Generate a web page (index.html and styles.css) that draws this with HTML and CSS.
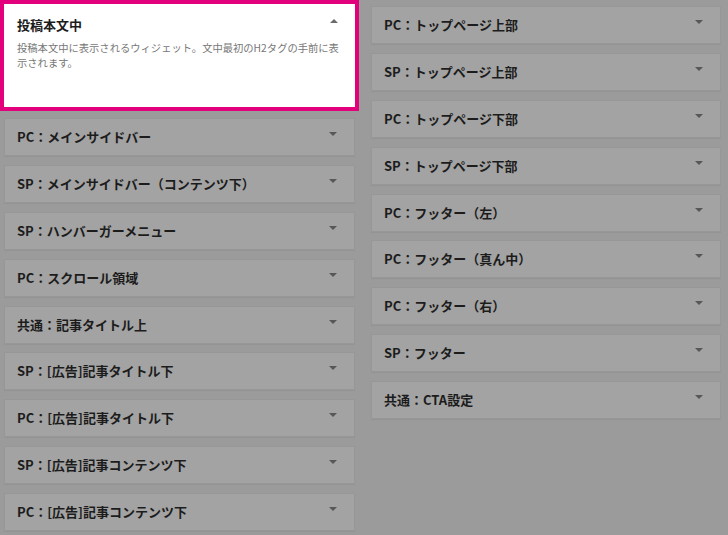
FILE: index.html
```html
<!DOCTYPE html>
<html lang="ja">
<head>
  <meta charset="UTF-8">
  <title>ウィジェット</title>
  <link rel="stylesheet" href="styles.css">
</head>
<body>
  <div class="widgets">
    <div class="column left">
      <div class="widget open">
        <div class="widget-head">
          <h3>投稿本文中</h3>
          <span class="arrow up"></span>
        </div>
        <p class="desc">投稿本文中に表示されるウィジェット。文中最初のH2タグの手前に表示されます。</p>
      </div>
      <div class="widget"><h3>PC：メインサイドバー</h3><span class="arrow"></span></div>
      <div class="widget"><h3>SP：メインサイドバー（コンテンツ下）</h3><span class="arrow"></span></div>
      <div class="widget"><h3>SP：ハンバーガーメニュー</h3><span class="arrow"></span></div>
      <div class="widget"><h3>PC：スクロール領域</h3><span class="arrow"></span></div>
      <div class="widget"><h3>共通：記事タイトル上</h3><span class="arrow"></span></div>
      <div class="widget"><h3>SP：[広告]記事タイトル下</h3><span class="arrow"></span></div>
      <div class="widget"><h3>PC：[広告]記事タイトル下</h3><span class="arrow"></span></div>
      <div class="widget"><h3>SP：[広告]記事コンテンツ下</h3><span class="arrow"></span></div>
      <div class="widget"><h3>PC：[広告]記事コンテンツ下</h3><span class="arrow"></span></div>
    </div>
    <div class="column right">
      <div class="widget"><h3>PC：トップページ上部</h3><span class="arrow"></span></div>
      <div class="widget"><h3>SP：トップページ上部</h3><span class="arrow"></span></div>
      <div class="widget"><h3>PC：トップページ下部</h3><span class="arrow"></span></div>
      <div class="widget"><h3>SP：トップページ下部</h3><span class="arrow"></span></div>
      <div class="widget"><h3>PC：フッター（左）</h3><span class="arrow"></span></div>
      <div class="widget"><h3>PC：フッター（真ん中）</h3><span class="arrow"></span></div>
      <div class="widget"><h3>PC：フッター（右）</h3><span class="arrow"></span></div>
      <div class="widget"><h3>SP：フッター</h3><span class="arrow"></span></div>
      <div class="widget"><h3>共通：CTA設定</h3><span class="arrow"></span></div>
    </div>
  </div>
</body>
</html>
```

FILE: styles.css
```css
body {
  margin: 0;
  background: #9b9b9b;
  font-family: "Noto Sans CJK JP", "Noto Sans", sans-serif;
  color: #1c1c1c;
  overflow: hidden;
}
.widgets {
  display: flex;
  gap: 16px;
  padding-left: 4px;
}
.column.left {
  width: 351px;
  padding-top: 4px;
}
.column.right {
  width: 350px;
  padding-top: 6px;
}
.widget {
  box-sizing: border-box;
  height: 38px;
  margin-bottom: 8.875px;
  padding: 0 17px 0 12px;
  display: flex;
  align-items: center;
  justify-content: space-between;
  background: #a3a3a3;
  border: 1px solid #979797;
  box-shadow: 0 1px 1px rgba(0,0,0,0.04);
}
.widget h3 {
  margin: 0;
  font-size: 13px;
  font-weight: 600;
  line-height: 20px;
}
.arrow {
  width: 0;
  height: 0;
  border-left: 4px solid transparent;
  border-right: 4px solid transparent;
  border-top: 4px solid #575757;
  margin-bottom: 6px;
}
.arrow.up {
  border-top: none;
  border-bottom: 4px solid #6a6a6a;
}
.widget.open {
  display: block;
  height: 103px;
  margin-bottom: 11px;
  padding: 11px 12px 0 13px;
  background: #fff;
  border: none;
  outline: 4px solid #e3007d;
  box-shadow: none;
}
.widget-head {
  display: flex;
  align-items: center;
  justify-content: space-between;
  padding-right: 5px;
}
.widget-head .arrow.up {
  margin-bottom: 8px;
}
.desc {
  margin: 5px 0 0;
  font-size: 10.3px;
  line-height: 15px;
  color: #777;
}
```
